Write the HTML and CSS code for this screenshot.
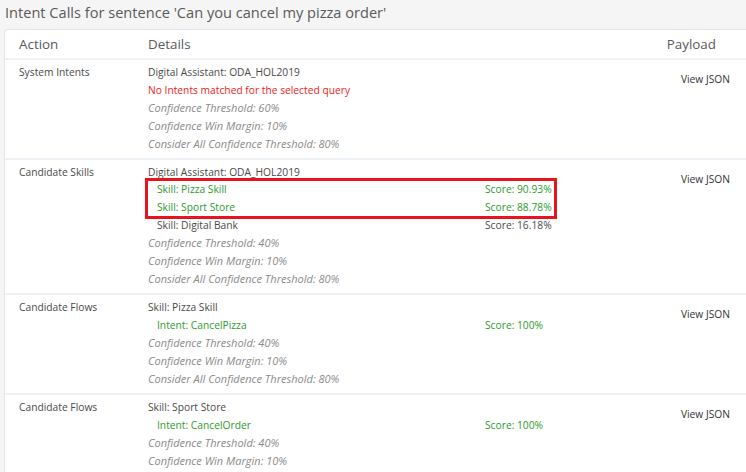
FILE: index.html
```html
<!DOCTYPE html>
<html>
<head>
<meta charset="utf-8">
<link rel="stylesheet" href="styles.css">
</head>
<body>
<div class="title">Intent Calls for sentence 'Can you cancel my pizza order'</div>
<div class="card">
  <div class="row head">
    <div class="c-action">Action</div>
    <div class="c-details">Details</div>
    <div class="c-payload">Payload</div>
  </div>

  <div class="row">
    <div class="c-action">System Intents</div>
    <div class="c-details">
      <div class="line">Digital Assistant: ODA_HOL2019</div>
      <div class="line red">No Intents matched for the selected query</div>
      <div class="line it">Confidence Threshold: 60%</div>
      <div class="line it">Confidence Win Margin: 10%</div>
      <div class="line it">Consider All Confidence Threshold: 80%</div>
    </div>
    <div class="c-payload"><span class="json">View JSON</span></div>
  </div>

  <div class="row">
    <div class="c-action">Candidate Skills</div>
    <div class="c-details">
      <div class="line">Digital Assistant: ODA_HOL2019</div>
      <div class="hl">
        <div class="line pair green"><span class="lbl">Skill: Pizza Skill</span><span>Score: 90.93%</span></div>
        <div class="line pair green"><span class="lbl">Skill: Sport Store</span><span>Score: 88.78%</span></div>
      </div>
      <div class="line pair"><span class="lbl">Skill: Digital Bank</span><span>Score: 16.18%</span></div>
      <div class="line it">Confidence Threshold: 40%</div>
      <div class="line it">Confidence Win Margin: 10%</div>
      <div class="line it">Consider All Confidence Threshold: 80%</div>
    </div>
    <div class="c-payload"><span class="json">View JSON</span></div>
  </div>

  <div class="row">
    <div class="c-action">Candidate Flows</div>
    <div class="c-details">
      <div class="line">Skill: Pizza Skill</div>
      <div class="line pair green"><span class="lbl">Intent: CancelPizza</span><span>Score: 100%</span></div>
      <div class="line it">Confidence Threshold: 40%</div>
      <div class="line it">Confidence Win Margin: 10%</div>
      <div class="line it">Consider All Confidence Threshold: 80%</div>
    </div>
    <div class="c-payload"><span class="json">View JSON</span></div>
  </div>

  <div class="row">
    <div class="c-action">Candidate Flows</div>
    <div class="c-details">
      <div class="line">Skill: Sport Store</div>
      <div class="line pair green"><span class="lbl">Intent: CancelOrder</span><span>Score: 100%</span></div>
      <div class="line it">Confidence Threshold: 40%</div>
      <div class="line it">Confidence Win Margin: 10%</div>
      <div class="line it">Consider All Confidence Threshold: 80%</div>
    </div>
    <div class="c-payload"><span class="json">View JSON</span></div>
  </div>
</div>
</body>
</html>
```

FILE: styles.css
```css
html, body {
  margin: 0;
  padding: 0;
}
body {
  background: #f5f5f6;
  font-family: "Open Sans", "Noto Sans", sans-serif;
  color: #4a4a4a;
  width: 746px;
  height: 472px;
  overflow: hidden;
}
.title {
  font-size: 14.6px;
  color: #5a5a5a;
  padding: 0 0 0 5px;
  height: 29px;
  line-height: 24px;
  white-space: nowrap;
}
.card {
  margin-left: 4px;
  background: #fff;
  border: 1px solid #e2e4e7;
  border-right: none;
  border-radius: 4px 0 0 4px;
}
.row {
  display: grid;
  grid-template-columns: 129px 1fr 110px;
  padding: 3px 0 5px 14px;
  border-bottom: 2px solid #eef1f5;
  font-size: 10.25px;
  line-height: 18px;
}
.row.head {
  font-size: 13.4px;
  color: #5a5a5a;
  line-height: 20px;
  padding: 4px 0 4px 14px;
}
.row.head .c-payload {
  text-align: right;
  padding-right: 30px;
}
.c-payload {
  text-align: right;
  padding-right: 16px;
}
.json {
  display: inline-block;
  margin-top: 7px;
  color: #333;
}
.line {
  white-space: nowrap;
}
.pair {
  display: flex;
}
.lbl {
  flex: 0 0 328px;
  padding-left: 9px;
}
.green {
  color: #2d9a2d;
}
.red {
  color: #f21a1a;
}
.it {
  font-style: italic;
  font-size: 11px;
  color: #8a8a8a;
}
.hl {
  width: 406px;
  height: 35px;
  outline: 3px solid #e8131d;
}
.hl .line {
  line-height: 17.5px;
}
```
